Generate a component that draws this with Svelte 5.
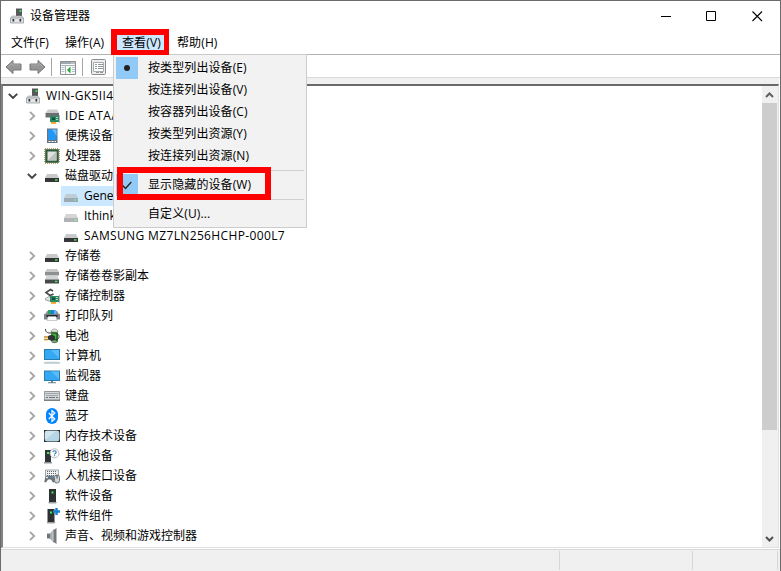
<script>
  const menuBar = [
    { label: '文件(F)' },
    { label: '操作(A)' },
    { label: '查看(V)', open: true },
    { label: '帮助(H)' }
  ];

  const viewMenu = [
    { label: '按类型列出设备(E)', mark: 'dot' },
    { label: '按连接列出设备(V)' },
    { label: '按容器列出设备(C)' },
    { label: '按类型列出资源(Y)' },
    { label: '按连接列出资源(N)' },
    { separator: true },
    { label: '显示隐藏的设备(W)', mark: 'check', framed: true },
    { separator: true },
    { label: '自定义(U)...' }
  ];

  const tree = [
    { label: 'WIN-GK5II4', icon: 'root', level: 0, state: 'open', latin: true },
    { label: 'IDE ATA/ATAPI', icon: 'ide', level: 1, state: 'closed', latin: true },
    { label: '便携设备', icon: 'portable', level: 1, state: 'closed' },
    { label: '处理器', icon: 'cpu', level: 1, state: 'closed' },
    { label: '磁盘驱动器', icon: 'disk', level: 1, state: 'open' },
    { label: 'Generic', icon: 'ghost', level: 2, selected: true },
    { label: 'Ithink', icon: 'ghost', level: 2 },
    { label: 'SAMSUNG MZ7LN256HCHP-000L7', icon: 'disk', level: 2, latin: true },
    { label: '存储卷', icon: 'disk', level: 1, state: 'closed' },
    { label: '存储卷卷影副本', icon: 'disks', level: 1, state: 'closed' },
    { label: '存储控制器', icon: 'storage', level: 1, state: 'closed' },
    { label: '打印队列', icon: 'printer', level: 1, state: 'closed' },
    { label: '电池', icon: 'battery', level: 1, state: 'closed' },
    { label: '计算机', icon: 'computer', level: 1, state: 'closed' },
    { label: '监视器', icon: 'monitor', level: 1, state: 'closed' },
    { label: '键盘', icon: 'keyboard', level: 1, state: 'closed' },
    { label: '蓝牙', icon: 'bluetooth', level: 1, state: 'closed' },
    { label: '内存技术设备', icon: 'memory', level: 1, state: 'closed' },
    { label: '其他设备', icon: 'other', level: 1, state: 'closed' },
    { label: '人机接口设备', icon: 'hid', level: 1, state: 'closed' },
    { label: '软件设备', icon: 'software', level: 1, state: 'closed' },
    { label: '软件组件', icon: 'component', level: 1, state: 'closed' },
    { label: '声音、视频和游戏控制器', icon: 'sound', level: 1, state: 'closed' }
  ];
</script>

{#snippet drive(y, top, body)}
  <path d="M3 {y}h10l2 4H1z" fill={top} />
  <path d="M1 {y + 4}h14v4H1z" fill={body} />
  <path d="M11 {y + 5.2}h2.5v1.5H11z" fill="#4be05a" />
{/snippet}

{#snippet card()}
  <path d="M6 8h9v6H6z" fill="#2c8a63" />
  <path d="M8 9.5h3v2.5H8z" fill="#16513b" />
  <path d="M12 9.5h2M12 11.5h2" stroke="#a8e0c2" />
  <path d="M7 14h5v1.8H7z" fill="#f2a51d" />
  <path d="M15.3 7v8" stroke="#8a8f92" stroke-width=".8" />
{/snippet}

{#snippet tower()}
  <path d="M5 1h7v13H5z" fill="#2e3133" />
  <path d="M4 14h9l-1 1.5H5z" fill="#9da1a3" />
  <path d="M7.500 3.500h2v2h-2z" fill="#3fef48" />
{/snippet}

{#snippet glyph(name)}
  <svg class="icon" viewBox="0 0 16 16" width="16" height="16" fill="none">
    {#if name === 'root'}
      <path d="M7 .5h6V10H7z" fill="#55595b" />
      <path d="M10.500 2h1.800v2h-1.800z" fill="#3ce24d" />
      <path d="M3 8h10l1.5 3h-13z" fill="#d2d5d6" stroke="#9da1a3" stroke-width=".6" />
      <path d="M1.5 10h13v5h-13z" fill="#e2e4e5" stroke="#8b9092" stroke-width=".7" />
      <path d="M3.5 11h1.7v2.5H3.500zM10.500 11h1.700v2.500h-1.700z" fill="#303436" />
    {:else if name === 'ide'}
      <path d="M4 1.500h9l2 3.500H1.500z" fill="#c9cbcc" />
      <path d="M1.500 5H15v4.500H1.500z" fill="#6b6f71" />
      {@render card()}
    {:else if name === 'portable'}
      <path d="M3 .5h10.500v14.500H3z" fill="#65727c" />
      <path d="M4 1.500h8.500V12H4z" fill="#2396f3" />
      <path d="M8 1.500h4.500V8z" fill="#61bcff" />
      <path d="M4.5 13.500h7.500" stroke="#fff" stroke-dasharray="2 1" />
    {:else if name === 'cpu'}
      <path d="M1 .6h14M1 15.400h14M.6 1v14M15.400 1v14" stroke="#b9933e" stroke-dasharray="1 1" />
      <path d="M1.200 1.200h13.600v13.600H1.200z" fill="#2f5a41" />
      <path d="M3.500 3.500h9v9h-9z" fill="#dfe2e0" />
      <path d="M12.500 3.500v9h-9z" fill="#bcc2be" />
    {:else if name === 'disk'}
      {@render drive(6, '#c7c9ca', '#343638')}
    {:else if name === 'ghost'}
      <g opacity=".6">{@render drive(6, '#b6babd', '#7b8184')}</g>
    {:else if name === 'disks'}
      <path d="M3 1h10l2 3H1z" fill="#c6c8c9" />
      <path d="M1 4h14v3.500H1z" fill="#8c9092" />
      {@render drive(7.5, '#d1d3d4', '#45494b')}
    {:else if name === 'storage'}
      <path d="M9 3L6.500 1.500 2 4.500l4 3 3.500-1.500" stroke="#4a4d4f" stroke-width="1.700" />
      <path d="M1.500 10.500L5 8.500l4 2.500-2 2.500-5.500-1.500z" fill="#e2e5e6" stroke="#8b9092" stroke-width=".8" />
      {@render card()}
    {:else if name === 'printer'}
      <path d="M3 3h10l2.5 4H.5z" fill="#8b9093" />
      <path d="M4 2h3v4H4z" fill="#22a55a" />
      <path d="M7 2h3v4H7z" fill="#187ddc" />
      <path d="M10 2h2v4h-2z" fill="#55b8ff" />
      <path d="M0 6h16v5.500H0z" fill="#7d8386" />
      <path d="M2.500 7h11v2h-11z" fill="#202426" />
      <path d="M4 8.500h8l1 4H3z" fill="#fff" stroke="#a5aaad" stroke-width=".6" />
    {:else if name === 'battery'}
      <path d="M7 3h7v10.500H7z" fill="#49ad3a" />
      <path d="M7 4c0-4 7-4 7 0z" fill="#e1e6e0" stroke="#707572" stroke-width=".6" />
      <path d="M12 5h2v8.500h-2z" fill="#1c7827" />
      <path d="M7 13.500c1 2.300 6 2.300 7 0z" fill="#687169" />
      <path d="M1.500 1c0 4 3 4 6 4s7.500 0 7.500 3.500-4 4-5 2.500" stroke="#303436" />
      <path d="M4 8l4-1.500 3 2v3L8 13l-4-1.500z" fill="#303436" />
      <path d="M0 9h4M0 11.500h4" stroke="#c58c22" stroke-width="1.300" />
    {:else if name === 'computer'}
      <path d="M0 1h16v11H0z" fill="#287cab" />
      <path d="M1 2h14v9H1z" fill="#35a8f4" />
      <path d="M7 2h8v8z" fill="#5cbcfb" />
      <path d="M1.500 13h13l1.500 2.200H0z" fill="#edf2f5" />
      <path d="M0 15h16" stroke="#8198a6" stroke-width=".8" />
    {:else if name === 'monitor'}
      <path d="M0 2.500h16v10.500H0z" fill="#287cab" />
      <path d="M1 3.500h14V12H1z" fill="#35a8f4" />
      <path d="M7 3.500h8V11z" fill="#5cbcfb" />
      <path d="M7 13h2v1.200h3v1H4v-1h3z" fill="#68818f" />
    {:else if name === 'keyboard'}
      <path d="M.4 3.500h15.200v9H.4z" fill="#d6d9da" stroke="#7b8286" stroke-width=".8" />
      <path d="M1.500 5.500h13M2.500 7.500h11" stroke="#68737c" stroke-dasharray="1 1" />
      <path d="M2 9.500h2M5 9.500h6M12 9.500h2" stroke="#68737c" />
      <path d="M0 11.500h16V13H0z" fill="#7b8286" />
    {:else if name === 'bluetooth'}
      <rect x="2" width="12" height="16" rx="6" fill="#0084ff" />
      <path d="M4.800 5l6 6L8 13.500v-11L10.800 5l-6 6" stroke="#fff" stroke-width="1.200" />
    {:else if name === 'memory'}
      <rect x=".5" y="2.500" width="15" height="11" rx="1" fill="#b6d5e5" stroke="#65717a" />
      <path d="M1 3h11L1 12z" fill="#d2e5ef" />
      <path d="M.5 4.500v-2h2M13.500 2.500h2v2M.5 11.500v2h2M13.500 13.500h2v-2" stroke="#2b3033" stroke-width="1.200" />
    {:else if name === 'other'}
      <path d="M1 2h6v12H1z" fill="#303436" />
      <path d="M0 14h8v1.500H0z" fill="#929799" />
      <path d="M3 4h2v2H3z" fill="#3fef48" />
      <circle cx="10.500" cy="5.300" r="4.500" fill="#fff" stroke="#a5acb0" stroke-width=".8" />
      <path d="M9 4.300c0-2 3.200-2 3.200 0 0 1.200-1.600 1.200-1.600 2.300M10.600 7.300v1" stroke="#2877a8" stroke-width="1.100" />
    {:else if name === 'hid'}
      <path d="M1.500 2h13v6h-13z" fill="#f0f1f2" stroke="#7b8286" stroke-width=".7" />
      <path d="M3 3.500h10M3 5.500h10M3 7.500h10" stroke="#60686d" stroke-dasharray="1 1" />
      <path d="M1.500 8h8l1.500 6-2 .500-2-3H4l-2 3L.3 14z" fill="#6a7277" />
      <path d="M2 9.500h2M3 8.500v2" stroke="#fff" stroke-width=".7" />
      <path d="M7 8.500h1.500V10H7z" fill="#2597ec" />
      <rect x="10.500" y="7" width="5" height="8" rx="2.300" fill="#d0d4d6" stroke="#6d7478" />
      <path d="M13 7v3.500" stroke="#444" />
    {:else if name === 'software'}
      {@render tower()}
    {:else if name === 'component'}
      <g transform="translate(-1.500)">{@render tower()}</g>
      <path d="M9 3.500h7M12.500 0v7" stroke="#1683cf" stroke-width="2.400" />
    {:else if name === 'sound'}
      <path d="M3 5.500h3v5H3z" fill="#6f7679" />
      <path d="M6 5.500l4-4.500v14l-4-4.500z" fill="#a7acaf" />
      <path d="M9 2.500L12.500 0v16L9 13.500z" fill="#737a7d" />
      <path d="M9 3v10" stroke="#d4d7d8" />
    {/if}
  </svg>
{/snippet}

{#snippet arrow()}
  <svg width="18" height="16" viewBox="0 0 18 16">
    <path d="M1 8l7-6.500V5h8v6H8v3.500z" fill="#969696" stroke="#777" stroke-linejoin="round" />
    <path d="M3 8l4-4v2h8" fill="none" stroke="#b0b0b0" stroke-width=".8" />
  </svg>
{/snippet}

<main class="window">
  <header class="title">
    <span class="app">{@render glyph('root')}</span>
    <span class="caption">设备管理器</span>
    <svg class="controls" width="103" height="12" viewBox="0 0 103 12" fill="none" stroke="#000">
      <path d="M0 6.500h10M45.500 1.500h9v9h-9z" />
      <path d="M91.500 1.500l9.500 9.500M101 1.500l-9.500 9.500" stroke-width="1.100" />
    </svg>
  </header>

  <nav class="menubar">
    {#each menuBar as item}
      <span class="menu-title" class:open={item.open}>{item.label}</span>
    {/each}
    <div class="frame menu-frame"></div>
  </nav>

  <div class="toolbar">
    <span class="back">{@render arrow()}</span>
    <span class="forward">{@render arrow()}</span>
    <i></i>
    <svg class="console" width="16" height="14" viewBox="0 0 16 14" fill="none">
      <path d="M.5 .5h15v13H.5z" fill="#fafafa" stroke="#8b8f92" />
      <path d="M1 1h14v2H1z" fill="#9fa9b2" />
      <path d="M11.500 2h1M13.500 2h1" stroke="#fff" />
      <path d="M1 4.500h14M5.500 5v8" stroke="#a9b0b5" />
      <path d="M1.500 6.500h3M1.500 8.500h3M1.500 10.500h3M12 6.500h3M12 8.500h3M12 10.500h3" stroke="#b4c0ca" />
      <path d="M7 9l3.500-3.500v7z" fill="#24a633" />
    </svg>
    <i></i>
    <svg class="properties" width="15" height="16" viewBox="0 0 15 16" fill="none">
      <rect x=".5" y=".5" width="14" height="15" rx="1" fill="#eceeef" stroke="#898d90" />
      <path d="M2.500 3.500h10v9h-10z" fill="#fff" stroke="#a6aaad" />
      <path d="M4 5.500h2M7 5.500h5M4 7.500h2M7 7.500h5M4 9.500h2M7 9.500h5M5 13.500h3M9 13.500h3" stroke="#91979b" />
    </svg>
  </div>

  <section class="pane">
    <ul class="tree">
      {#each tree as node}
        <li class="l{node.level}" class:selected={node.selected}>
          <span class="twist">
            {#if node.state === 'open'}
              <svg width="10" height="10" viewBox="0 0 10 10" fill="none"><path d="M.8 2.800L5 7l4.200-4.200" stroke="#404040" stroke-width="1.900" /></svg>
            {:else if node.state === 'closed'}
              <svg width="10" height="10" viewBox="0 0 10 10" fill="none"><path d="M3 .8L7.200 5 3 9.200" stroke="#a6a6a6" stroke-width="1.900" /></svg>
            {/if}
          </span>
          <span class="node">
            {@render glyph(node.icon)}
            <span class="label" class:latin={node.latin}>{node.label}</span>
          </span>
        </li>
      {/each}
    </ul>
    <aside class="scroll">
      <svg width="15" height="17" viewBox="0 0 15 17" fill="none"><path d="M4 11l3.500-3.500L11 11" stroke="#606060" stroke-width="2" /></svg>
      <div class="thumb"></div>
      <svg width="15" height="17" viewBox="0 0 15 17" fill="none"><path d="M4 7l3.500 3.500L11 7" stroke="#505050" stroke-width="2" /></svg>
    </aside>
  </section>

  <footer class="status"><span></span><span></span><span></span></footer>

  <div class="dropdown">
    {#each viewMenu as item}
      {#if item.separator}
        <div class="separator"></div>
      {:else}
        <div class="item">
          <span class="mark" class:on={item.mark}>
            {#if item.mark === 'dot'}
              <b></b>
            {:else if item.mark === 'check'}
              <svg width="10" height="9" viewBox="0 0 10 9" fill="none"><path d="M.7 4.500l2.800 3L9.300 1" stroke="#222" stroke-width="1.300" /></svg>
            {/if}
          </span>
          <span class="text">{item.label}</span>
          {#if item.framed}<div class="frame item-frame"></div>{/if}
        </div>
      {/if}
    {/each}
  </div>
</main>

<style>
  :global(body) { margin: 0; overflow: hidden; }
  * { box-sizing: border-box; }
  svg { display: block; flex: none; }
  .window {
    position: relative;
    width: 781px;
    height: 571px;
    display: flex;
    flex-direction: column;
    border: solid #6b6b6b;
    border-width: 1px 1px 0;
    background: #fff;
    color: #000;
    font: 12px/20px "Open Sans", "Noto Sans CJK SC", sans-serif;
    white-space: nowrap;
    overflow: hidden;
  }
  .title { height: 29px; display: flex; align-items: center; padding: 0 16px 0 8px; }
  .app { margin-right: 5px; }
  .caption { flex: 1; }
  .menubar { position: relative; height: 24px; display: flex; align-items: center; padding-left: 4px; }
  .menu-title { width: 54px; height: 18px; line-height: 19px; padding-left: 6px; letter-spacing: .12px; }
  .menu-title.open { width: 47px; margin: 0 7px 0 4px; padding-left: 5px; background: #cce8ff; }
  .frame { position: absolute; border: 6px solid #f00; z-index: 3; }
  .menu-frame { left: 110px; top: -1px; width: 58px; height: 26px; border-width: 6px 5px 5px 6px; }
  .toolbar {
    height: 24px;
    display: flex;
    align-items: center;
    border-top: 1px solid #b3b3b3;
    border-bottom: 1px solid #dadada;
    padding: 2px 0 0 4px;
  }
  .forward { transform: scaleX(-1); margin-left: 5px; }
  .toolbar i { width: 1px; height: 18px; background: #a6a6a6; margin: 0 8px 0 5px; }
  .console { margin-top: 2px; }
  .console + i { margin: 0 8px 0 6px; }
  .pane {
    height: 464px;
    margin: 6px 1px 0 0;
    display: flex;
    border: solid #e0e0e0;
    border-width: 2px 1px 1px 2px;
    border-top-color: #696969;
    border-left-color: #828282;
    box-shadow: 0 -6px 0 #f0f0f0;
  }
  .tree { flex: 1; margin: 0; padding: 0; list-style: none; }
  li { display: flex; height: 20px; align-items: center; }
  .l0 { padding-left: 5px; }
  .l1 { padding-left: 24px; }
  .l2 { padding-left: 43px; }
  .twist { width: 12px; flex: none; }
  .node { height: 20px; display: flex; align-items: center; padding-left: 5px; }
  .label { margin-left: 5px; }
  .label.latin { letter-spacing: .36px; }
  .selected .node { background: #cce8ff; }
  .l2 .twist { width: 15px; }
  .l2 .node { padding-left: 2px; }
  .scroll { width: 16px; display: flex; flex-direction: column; background: #f0f0f0; }
  .thumb { height: 327px; width: 15px; background: #cdcdcd; margin-bottom: auto; }
  .status {
    flex: 1;
    margin-top: 1px;
    border-top: 1px solid #d7d7d7;
    background: #f0f0f0;
    display: flex;
    padding-top: 1px;
  }
  .status span { width: 85px; height: 19px; border-right: 1px solid #d7d7d7; }
  .status span:first-child { width: 559px; }
  .status span:nth-child(2) { width: 133px; }
  .dropdown {
    position: absolute;
    left: 112px;
    top: 53px;
    width: 194px;
    padding: 2px;
    border: 1px solid #ccc;
    background: #f2f2f2;
    z-index: 2;
  }
  .item { position: relative; display: flex; height: 22px; align-items: center; }
  .mark { width: 22px; height: 22px; display: flex; align-items: center; justify-content: center; }
  .mark.on { background: #91c9f7; }
  .mark b { width: 6px; height: 6px; border-radius: 50%; background: #222; }
  .text { margin-left: 10px; letter-spacing: .1px; }
  .separator { height: 7px; margin: 0 0 0 28px; border-top: 3px solid transparent; }
  .separator::after { content: ""; display: block; height: 1px; background: #d0d0d0; }
  .item-frame { left: 1px; top: -7px; width: 154px; height: 33px; }
</style>
